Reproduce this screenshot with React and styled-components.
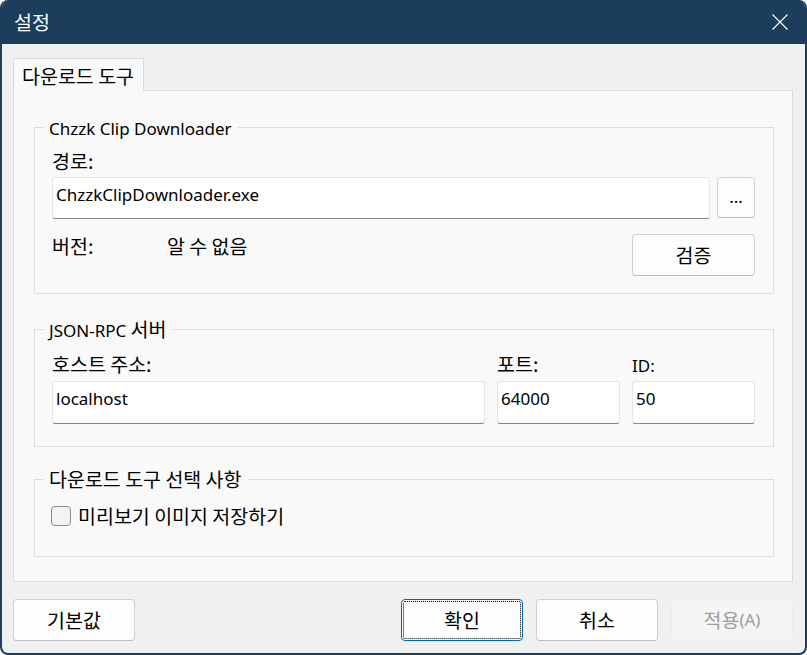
import React from 'react'
import styled, { createGlobalStyle } from 'styled-components'

const Global = createGlobalStyle`
  html, body {
    margin: 0;
    padding: 0;
    background: #ffffff;
  }
  body {
    font-family: "Noto Sans CJK KR", "Noto Sans", sans-serif;
  }
`

// Latin runs use a smaller face so they match the Segoe-sized text of the dialog
const Latin = styled.span`
  font-family: "Noto Sans", "Noto Sans CJK KR", sans-serif;
  font-size: 17px;
`

const Window = styled.div`
  width: 807px;
  height: 655px;
  box-sizing: border-box;
  display: flex;
  flex-direction: column;
  background: #f0f0f0;
  border: 2px solid #1c3d5b;
  border-top: 0;
  border-radius: 8px;
  overflow: hidden;
  font-size: 19.5px;
  line-height: 22px;
  color: #000;
`

const TitleBar = styled.div`
  height: 44px;
  flex: none;
  display: flex;
  align-items: center;
  justify-content: space-between;
  padding: 0 17px 0 12px;
  background: #1c3d5b;
  color: #fff;
`

const Body = styled.div`
  flex: 1;
  display: flex;
  flex-direction: column;
  padding: 14px 12px 12px 11px;
  min-height: 0;
`

const TabStrip = styled.div`
  display: flex;
`

const Tab = styled.div`
  height: 33px;
  box-sizing: border-box;
  padding: 5px 9px 0 8px;
  background: #f9f9f9;
  border: 1px solid #dadada;
  border-bottom: 0;
  margin-bottom: -1px;
  position: relative;
  z-index: 1;
  line-height: 24px;
`

const Panel = styled.div`
  flex: 1;
  display: flex;
  flex-direction: column;
  background: #f9f9f9;
  border: 1px solid #dcdcdc;
  padding: 25px 18px 0 20px;
`

const Group = styled.fieldset`
  margin: ${p => p.$top || 0}px 0 0;
  border: 1px solid #dcdcdc;
  padding: ${p => p.$ptop || 12}px 18px ${p => p.$bottom}px 17px;
  min-width: 0;
  display: flex;
  flex-direction: column;
`

const Legend = styled.legend`
  padding: 0 6px 0 5px;
  margin-left: -8px;
  line-height: 22px;
  height: 22px;
`

const Label = styled.div`
  line-height: 22px;
  height: 22px;
  white-space: nowrap;
`

const Field = styled.div`
  display: flex;
  flex-direction: column;
  gap: ${p => p.$gap || 5}px;
  flex: ${p => (p.$w ? 'none' : 1)};
  width: ${p => (p.$w ? `${p.$w}px` : 'auto')};
`

const Row = styled.div`
  display: flex;
  gap: ${p => p.$gap ?? 12}px;
  margin-top: ${p => p.$top || 0}px;
  align-items: flex-start;
`

const Input = styled.div`
  flex: ${p => (p.$grow ? 1 : 'none')};
  height: ${p => p.$h || 42}px;
  box-sizing: border-box;
  background: #fff;
  border: 1px solid #e5e5e5;
  border-bottom-color: #868686;
  border-radius: 3px;
  padding: 6px 3px 0;
  line-height: 22px;
  font-family: "Noto Sans", "Noto Sans CJK KR", sans-serif;
  font-size: 17px;
`

const Button = styled.div`
  width: ${p => p.$w || 122}px;
  height: ${p => p.$h || 42}px;
  box-sizing: border-box;
  display: flex;
  align-items: center;
  justify-content: center;
  background: ${p => (p.$disabled ? '#f5f5f5' : '#fdfdfd')};
  border: 1px solid ${p => (p.$default ? '#0067c0' : p.$disabled ? '#ebebeb' : '#d0d0d0')};
  border-bottom-color: ${p => (p.$default ? '#0067c0' : p.$disabled ? '#ebebeb' : '#bcbcbc')};
  border-radius: 4px;
  color: ${p => (p.$disabled ? '#9d9d9d' : '#000')};
  outline: ${p => (p.$default ? '1px dotted #000' : 'none')};
  outline-offset: -3px;
  flex: none;
  padding-bottom: 1px;
`

const VersionLabel = styled.div`
  width: 115px;
  line-height: 24px;
`

const Value = styled.div`
  flex: 1;
  line-height: 24px;
`

const CheckRow = styled.label`
  display: flex;
  align-items: center;
  gap: 7px;
  height: 28px;
`

const Box = styled.span`
  width: 20px;
  height: 20px;
  box-sizing: border-box;
  border: 1px solid #8a8a8a;
  border-radius: 4px;
  background: #f3f3f3;
  margin-left: -1px;
`

const Footer = styled.div`
  display: flex;
  gap: 13px;
  margin-top: 17px;
  flex: none;
`

const Spacer = styled.div`
  flex: 1;
`

function CloseIcon () {
  return (
    <svg width='16' height='16' viewBox='0 0 16 16'>
      <path d='M0.5 0.5 L15.5 15.5 M15.5 0.5 L0.5 15.5' stroke='#fff' strokeWidth='1.1' fill='none' />
    </svg>
  )
}

export default function App () {
  return (
    <>
      <Global />
      <Window>
        <TitleBar>
          <span>설정</span>
          <CloseIcon />
        </TitleBar>
        <Body>
          <TabStrip>
            <Tab>다운로드 도구</Tab>
          </TabStrip>
          <Panel>
            <Group $bottom={17}>
              <Legend><Latin>Chzzk Clip Downloader</Latin></Legend>
              <Field>
                <Label>경로:</Label>
                <Row $gap={7}>
                  <Input $grow>ChzzkClipDownloader.exe</Input>
                  <Button $w={38} $h={41}><Latin>...</Latin></Button>
                </Row>
              </Field>
              <Row $top={15} $gap={0}>
                <VersionLabel>버전:</VersionLabel>
                <Value>알 수 없음</Value>
                <Button $w={123}>검증</Button>
              </Row>
            </Group>
            <Group $top={24} $ptop={13} $bottom={22}>
              <Legend><Latin>JSON-RPC</Latin> 서버</Legend>
              <Row>
                <Field $gap={6}>
                  <Label>호스트 주소:</Label>
                  <Input $h={43}>localhost</Input>
                </Field>
                <Field $w={123} $gap={6}>
                  <Label>포트:</Label>
                  <Input $h={43}>64000</Input>
                </Field>
                <Field $w={123} $gap={6}>
                  <Label><Latin>ID:</Latin></Label>
                  <Input $h={43}>50</Input>
                </Field>
              </Row>
            </Group>
            <Group $top={21} $bottom={26}>
              <Legend>다운로드 도구 선택 사항</Legend>
              <CheckRow>
                <Box />
                <span>미리보기 이미지 저장하기</span>
              </CheckRow>
            </Group>
          </Panel>
          <Footer>
            <Button>기본값</Button>
            <Spacer />
            <Button $default>확인</Button>
            <Button>취소</Button>
            <Button $disabled>적용<Latin>(A)</Latin></Button>
          </Footer>
        </Body>
      </Window>
    </>
  )
}
